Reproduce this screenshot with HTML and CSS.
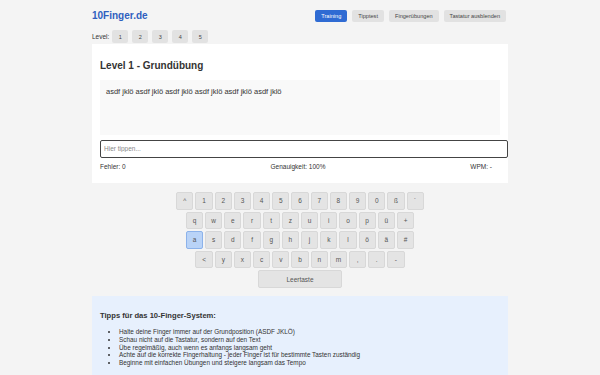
FILE: index.html
```html
<!DOCTYPE html>
<html>
<head>
    <title>10Finger.de - Tipptraining</title>
    <link rel="stylesheet" href="styles.css">
</head>
<body>
    <div class="container">
        <div class="header">
            <div class="logo">10Finger.de</div>
            <div class="nav">
                <button class="nav-btn active">Training</button>
                <button class="nav-btn">Tipptest</button>
                <button class="nav-btn">Fingerübungen</button>
                <button class="nav-btn">Tastatur ausblenden</button>
            </div>
        </div>

        <!-- Level Auswahl -->
        <div class="levels">
            <span class="level-label">Level:</span>
            <button class="level-btn">1</button>
            <button class="level-btn">2</button>
            <button class="level-btn">3</button>
            <button class="level-btn">4</button>
            <button class="level-btn">5</button>
        </div>

        <div class="card">
            <h2>Level 1 - Grundübung</h2>
            <div class="text-display">asdf jklö asdf jklö asdf jklö asdf jklö asdf jklö asdf jklö</div>
            <input type="text" class="type-input" placeholder="Hier tippen...">
            <div class="stats">
                <span>Fehler: 0</span>
                <span>Genauigkeit: 100%</span>
                <span>WPM: -</span>
            </div>
        </div>

        <!-- Tastatur -->
        <div class="keyboard">
            <div class="key-row">
                <div class="key">^</div><div class="key">1</div><div class="key">2</div><div class="key">3</div><div class="key">4</div><div class="key">5</div><div class="key">6</div><div class="key">7</div><div class="key">8</div><div class="key">9</div><div class="key">0</div><div class="key">ß</div><div class="key">´</div>
            </div>
            <div class="key-row">
                <div class="key">q</div><div class="key">w</div><div class="key">e</div><div class="key">r</div><div class="key">t</div><div class="key">z</div><div class="key">u</div><div class="key">i</div><div class="key">o</div><div class="key">p</div><div class="key">ü</div><div class="key">+</div>
            </div>
            <div class="key-row">
                <div class="key highlight">a</div><div class="key">s</div><div class="key">d</div><div class="key">f</div><div class="key">g</div><div class="key">h</div><div class="key">j</div><div class="key">k</div><div class="key">l</div><div class="key">ö</div><div class="key">ä</div><div class="key">#</div>
            </div>
            <div class="key-row">
                <div class="key">&lt;</div><div class="key">y</div><div class="key">x</div><div class="key">c</div><div class="key">v</div><div class="key">b</div><div class="key">n</div><div class="key">m</div><div class="key">,</div><div class="key">.</div><div class="key">-</div>
            </div>
            <div class="key-row">
                <div class="key space">Leertaste</div>
            </div>
        </div>

        <div class="tips">
            <h3>Tipps für das 10-Finger-System:</h3>
            <ul>
                <li>Halte deine Finger immer auf der Grundposition (ASDF JKLÖ)</li>
                <li>Schau nicht auf die Tastatur, sondern auf den Text</li>
                <li>Übe regelmäßig, auch wenn es anfangs langsam geht</li>
                <li>Achte auf die korrekte Fingerhaltung - jeder Finger ist für bestimmte Tasten zuständig</li>
                <li>Beginne mit einfachen Übungen und steigere langsam das Tempo</li>
            </ul>
        </div>
    </div>
</body>
</html>
```

FILE: styles.css
```css
body {
    margin: 0;
    background: #f4f4f4;
    font-family: "Liberation Sans", Arial, sans-serif;
    color: #333;
}

.container { width: 416px; margin: 0 auto; }

/* Kopfzeile */
.header {
    display: flex;
    justify-content: space-between;
    align-items: center;
    padding-top: 9px;
}
.logo { font-size: 10px; font-weight: bold; color: #2f5fbf; line-height: 13px; }
.nav { display: flex; gap: 5px; padding-right: 2px; }
.nav-btn {
    font-family: inherit;
    font-size: 5.6px;
    background: #e2e2e2;
    color: #444;
    border: none;
    border-radius: 2px;
    padding: 0 6px;
    height: 12px;
}
.nav-btn.active { background: #2f6bd3; color: #fff; }

.levels { display: flex; align-items: center; gap: 4px; margin-top: 8px; }
.level-label { font-size: 6.5px; margin-right: -1px; }
.level-btn {
    font-family: inherit;
    font-size: 5.5px;
    width: 16px;
    height: 13px;
    padding: 0;
    background: #e2e2e2;
    color: #444;
    border: none;
    border-radius: 2px;
}

.card { background: #fff; margin-top: 1px; padding: 16px 8px 12px; }
.card h2 { font-size: 10px; line-height: 12px; margin: 0 0 8px; }
.text-display {
    background: #f9f9f9;
    height: 55px;
    box-sizing: border-box;
    padding: 7px 6px;
    font-size: 7.5px;
    line-height: 9px;
}
.type-input {
    display: block;
    width: 100%;
    margin-top: 5px;
    height: 15.5px;
    padding: 0 3px;
    border: 1.5px solid #444;
    border-radius: 2px;
    font-family: inherit;
    font-size: 6.5px;
    outline: none;
}
.type-input::placeholder { color: #888; }
.stats {
    display: flex;
    justify-content: space-between;
    margin: 5.5px 8px 0 0;
    font-size: 6.5px;
    line-height: 8px;
}

/* Tastatur */
.keyboard { margin: 8px 0 7px; }
.key-row { display: flex; justify-content: center; }
.key {
    width: 17.2px;
    height: 17.6px;
    margin: 1px;
    box-sizing: border-box;
    background: #e4e4e4;
    border: 1px solid #d8d8d8;
    border-radius: 2px;
    display: flex;
    align-items: center;
    justify-content: center;
    font-size: 6.5px;
    color: #555;
}
.key.highlight { background: #b9d3f7; border-color: #8cb2ea; }
.key.space { width: 84px; }

.tips { background: #e7f0fd; padding: 15px 8px 20px; }
.tips h3 { font-size: 7.6px; line-height: 9px; margin: 0 0 8.5px; }
.tips ul { margin: 0; padding-left: 19px; font-size: 6.4px; line-height: 7.6px; }
```
